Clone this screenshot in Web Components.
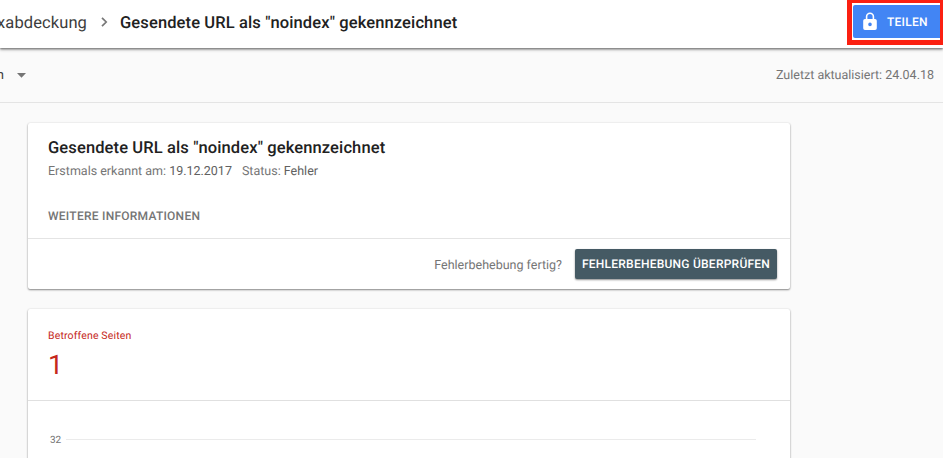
<!DOCTYPE html>
<html lang="de">
<head>
<meta charset="utf-8">
<title>Indexabdeckung</title>
<style>
html,body{margin:0;height:100%;overflow:hidden;background:#fafafa}
body{font-family:Roboto,"Liberation Sans",sans-serif;color:#212121;text-rendering:geometricPrecision}
</style>
</head>
<body>
<coverage-page></coverage-page>
<script>
const define = (name, html) => customElements.define(name, class extends HTMLElement {
  constructor() {
    super();
    const t = document.createElement('template');
    t.innerHTML = html;
    this.attachShadow({mode: 'open'}).append(t.content.cloneNode(true));
  }
});

define('share-button', `
<style>
:host{display:block;box-sizing:border-box;width:96px;height:45px;border:5px solid #fb2011;border-top-width:3px;border-right-width:3px;padding:2px 0 2px 1px;background:#fff}
button{all:unset;box-sizing:border-box;display:flex;align-items:center;width:87px;height:33px;padding-left:9px;background:#4285f4;border-radius:2px 0 0 2px;color:#fff;font-weight:500;font-size:12px;line-height:33px;letter-spacing:.25px;white-space:nowrap}
svg{display:block;width:16px;height:19px;margin-right:9px;flex:none}
span{padding-top:1px}
</style>
<button><svg viewBox="0 0 16 19"><path fill="#fff" fill-rule="evenodd" d="M13 7h-.8V4.700a4.200 4.200 0 0 0-8.400 0V7H3a1.800 1.800 0 0 0-1.800 1.800v7.400A1.800 1.800 0 0 0 3 18h10a1.800 1.800 0 0 0 1.800-1.800V8.800A1.800 1.800 0 0 0 13 7zM5.400 4.700a2.600 2.600 0 0 1 5.200 0V7H5.400zM8 14.200a1.800 1.800 0 1 1 0-3.600 1.800 1.800 0 0 1 0 3.600z"/></svg><span><slot></slot></span></button>`);

define('app-header', `
<style>
:host{display:flex;box-sizing:border-box;height:48px;background:#fff;box-shadow:0 1px 2px rgba(0,0,0,.45),0 2px 3px rgba(0,0,0,.22);position:relative;line-height:48px;font-size:16.500px;white-space:nowrap}
.parent{width:87px;display:flex;justify-content:flex-end;letter-spacing:.1px;color:#3c3c3c}
svg{width:7px;height:10px;margin:17px 12px 0 14px;flex:none}
.title{font-weight:500;letter-spacing:.12px;flex:1}
</style>
<span class="parent"><slot name="parent"></slot></span>
<svg viewBox="0 0 7 10"><path d="M1 .8 5.200 5 1 9.200" fill="none" stroke="#777" stroke-width="1.700"/></svg>
<span class="title"><slot></slot></span><slot name="action"></slot>`);

define('filter-bar', `
<style>
:host{display:flex;box-sizing:border-box;height:55px;border-bottom:1px solid #e4e4e4;line-height:56px;font-size:13px;white-space:nowrap;padding-right:9px}
.sel{width:4px;display:flex;justify-content:flex-end;color:#3c3c3c}
svg{width:9px;height:5px;margin:25px 0 0 13px}
.date{margin-left:auto;color:#757575;font-size:12.500px}
</style>
<span class="sel"><slot></slot></span>
<svg viewBox="0 0 9 5"><path fill="#757575" d="M0 0h9L4.500 4.700z"/></svg>
<span class="date"><slot name="date"></slot></span>`);

define('material-card', `
<style>
:host{display:block;box-sizing:border-box;width:762px;margin:0 0 20px 28px;background:#fff;border-radius:2px;box-shadow:0 1px 2px rgba(0,0,0,.45),0 0 2px rgba(0,0,0,.1)}
</style><slot></slot>`);

define('issue-summary', `
<style>
:host{display:block;white-space:nowrap}
.info{box-sizing:border-box;height:116px;border-bottom:1px solid #e4e4e4;padding:15px 20px 0}
h1{margin:0;font-size:16.500px;line-height:22px;font-weight:500;letter-spacing:.12px}
.meta{display:flex;gap:10px;font-size:12.500px;line-height:16px;margin-top:4px;color:#757575}
b{font-weight:400;color:#616161}
.more{margin-top:28px;font-size:12px;line-height:16px;font-weight:500;letter-spacing:.25px;color:#757575}
.actions{height:50px;display:flex;justify-content:flex-end;align-items:center;gap:13px;padding-right:13px}
.q{font-size:12.500px;color:#757575;padding-top:2px}
button{all:unset;box-sizing:border-box;width:202px;height:30px;line-height:29px;text-align:center;background:#455a64;color:#fff;border-radius:2px;font-size:12px;font-weight:500;letter-spacing:.24px;box-shadow:0 1px 2px rgba(0,0,0,.45)}
</style>
<div class="info"><h1>Gesendete URL als "noindex" gekennzeichnet</h1>
<div class="meta"><span>Erstmals erkannt am: <b>19.12.2017</b></span><span>Status: <b>Fehler</b></span></div>
<div class="more">WEITERE INFORMATIONEN</div></div>
<div class="actions"><span class="q">Fehlerbehebung fertig?</span><button>FEHLERBEHEBUNG ÜBERPRÜFEN</button></div>`);

define('affected-pages', `
<style>
:host{display:block;height:190px;white-space:nowrap}
.count{box-sizing:border-box;height:92px;border-bottom:1px solid #e0e0e0;padding:20px 20px 0;color:#c5281c}
.label{font-size:10.500px;line-height:14px;letter-spacing:.15px}
.n{font-size:27px;line-height:30px;margin-top:7px}
.axis{display:flex;align-items:center;gap:5px;padding:31px 34px 0 22px;font-size:10px;line-height:14px;color:#757575}
.axis span{padding-top:2px;margin-bottom:-2px}
.axis i{flex:1;height:1px;background:#ebebeb}
</style>
<div class="count"><div class="label">Betroffene Seiten</div><div class="n">1</div></div>
<div class="axis"><span>32</span><i></i></div>`);

define('coverage-page', `
<style>
:host{display:block;height:458px;overflow:hidden;background:#fafafa}
main{padding-top:20px}
</style>
<app-header><span slot="parent">xabdeckung</span>Gesendete URL als "noindex" gekennzeichnet<share-button slot="action">TEILEN</share-button></app-header>
<filter-bar>n<span slot="date">Zuletzt aktualisiert: 24.04.18</span></filter-bar>
<main><material-card><issue-summary></issue-summary></material-card><material-card><affected-pages></affected-pages></material-card></main>`);
</script>
</body>
</html>
